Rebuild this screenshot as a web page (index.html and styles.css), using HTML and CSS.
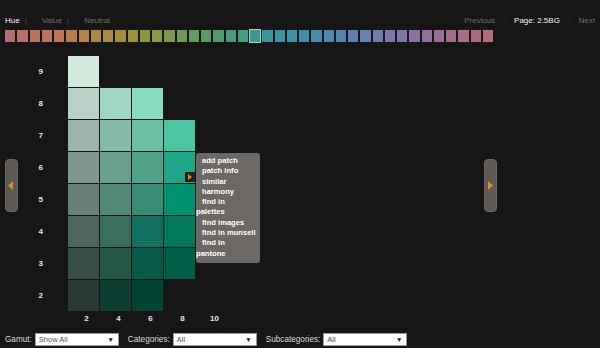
FILE: index.html
```html
<!DOCTYPE html>
<html lang="en">
  <head>
    <meta charset="UTF-8" />
    <title>Munsell Hue 2.5BG</title>
    <link rel="stylesheet" href="styles.css">
  </head>
  <body>
    <!-- top nav: views on the left, paging on the right -->
    <div class="topbar">
      <div class="views">
        <a class="view active">Hue</a><span class="pipe">|</span>
        <a class="view">Value</a><span class="pipe">|</span>
        <a class="view">Neutral</a>
      </div>
      <div class="pager">
        <a class="dim">Previous</a><span class="dots">::</span>
        <span class="page">Page: 2.5BG</span><span class="dots">::</span>
        <a class="dim">Next</a>
      </div>
    </div>

    <!-- 40 hue pages, 2.5R through 10RP -->
    <div class="hues">
      <span class="hue" style="background:#b56c70"></span>
      <span class="hue" style="background:#b86e6a"></span>
      <span class="hue" style="background:#ba7064"></span>
      <span class="hue" style="background:#bb735e"></span>
      <span class="hue" style="background:#bb7756"></span>
      <span class="hue" style="background:#b87c4e"></span>
      <span class="hue" style="background:#b38248"></span>
      <span class="hue" style="background:#ad8742"></span>
      <span class="hue" style="background:#a68c3e"></span>
      <span class="hue" style="background:#9e903c"></span>
      <span class="hue" style="background:#96933c"></span>
      <span class="hue" style="background:#8e963e"></span>
      <span class="hue" style="background:#869842"></span>
      <span class="hue" style="background:#7b9948"></span>
      <span class="hue" style="background:#709a52"></span>
      <span class="hue" style="background:#659a5b"></span>
      <span class="hue" style="background:#5a9a64"></span>
      <span class="hue" style="background:#519a6e"></span>
      <span class="hue" style="background:#499a78"></span>
      <span class="hue" style="background:#439a82"></span>
      <span class="hue current" style="background:#3c998c"></span>
      <span class="hue" style="background:#3a9795"></span>
      <span class="hue" style="background:#3a959d"></span>
      <span class="hue" style="background:#3b92a4"></span>
      <span class="hue" style="background:#3e8fa9"></span>
      <span class="hue" style="background:#448cac"></span>
      <span class="hue" style="background:#4c88ae"></span>
      <span class="hue" style="background:#5585af"></span>
      <span class="hue" style="background:#5f82af"></span>
      <span class="hue" style="background:#687fae"></span>
      <span class="hue" style="background:#717cac"></span>
      <span class="hue" style="background:#7a79a9"></span>
      <span class="hue" style="background:#8276a5"></span>
      <span class="hue" style="background:#8a73a0"></span>
      <span class="hue" style="background:#92719b"></span>
      <span class="hue" style="background:#996f95"></span>
      <span class="hue" style="background:#a06d8f"></span>
      <span class="hue" style="background:#a66c88"></span>
      <span class="hue" style="background:#ac6c80"></span>
      <span class="hue" style="background:#b16c78"></span>
    </div>

    <div class="main">
      <a class="nav prev">
        <svg width="5" height="9" viewBox="0 0 5 9"><path d="M5 0 L0 4.5 L5 9 Z" fill="#e8881c"/></svg>
      </a>

      <!-- value rows (9 at top) x chroma columns -->
      <div class="chart">
        <div class="vlabel">9</div>
        <div class="chip" style="background:#d3ebdf"></div>
        <div></div><div></div><div></div><div></div>

        <div class="vlabel">8</div>
        <div class="chip" style="background:#b8d0c6"></div>
        <div class="chip" style="background:#a0d7c4"></div>
        <div class="chip" style="background:#88dcc0"></div>
        <div></div><div></div>

        <div class="vlabel">7</div>
        <div class="chip" style="background:#9bb3a9"></div>
        <div class="chip" style="background:#87bba8"></div>
        <div class="chip" style="background:#6cbfa4"></div>
        <div class="chip" style="background:#4dc4a2"></div>
        <div></div>

        <div class="vlabel">6</div>
        <div class="chip" style="background:#80978f"></div>
        <div class="chip" style="background:#6b9f8e"></div>
        <div class="chip" style="background:#52a38a"></div>
        <div class="chip picked" style="background:#1fa888">
          <span class="menu-btn">
            <svg width="4" height="6" viewBox="0 0 4 6"><path d="M0 0 L4 3 L0 6 Z" fill="#e8881c"/></svg>
          </span>
          <ul class="menu">
            <li>add patch</li>
            <li>patch info</li>
            <li>similar</li>
            <li>harmony</li>
            <li>find in<br>palettes</li>
            <li>find images</li>
            <li>find in munsell</li>
            <li>find in<br>pantone</li>
          </ul>
        </div>
        <div></div>

        <div class="vlabel">5</div>
        <div class="chip" style="background:#687f79"></div>
        <div class="chip" style="background:#538777"></div>
        <div class="chip" style="background:#388b74"></div>
        <div class="chip" style="background:#009270"></div>
        <div></div>

        <div class="vlabel">4</div>
        <div class="chip" style="background:#4f6660"></div>
        <div class="chip" style="background:#3b6d5f"></div>
        <div class="chip" style="background:#11715e"></div>
        <div class="chip" style="background:#00765b"></div>
        <div></div>

        <div class="vlabel">3</div>
        <div class="chip" style="background:#3a4e48"></div>
        <div class="chip" style="background:#265646"></div>
        <div class="chip" style="background:#065a47"></div>
        <div class="chip" style="background:#005e47"></div>
        <div></div>

        <div class="vlabel">2</div>
        <div class="chip" style="background:#283935"></div>
        <div class="chip" style="background:#0e3e32"></div>
        <div class="chip" style="background:#024232"></div>
        <div></div><div></div>

        <div></div>
        <div class="clabel">2</div>
        <div class="clabel">4</div>
        <div class="clabel">6</div>
        <div class="clabel">8</div>
        <div class="clabel">10</div>
      </div>

      <a class="nav next">
        <svg width="5" height="9" viewBox="0 0 5 9"><path d="M0 0 L5 4.5 L0 9 Z" fill="#e8881c"/></svg>
      </a>
    </div>

    <!-- filters -->
    <div class="filters">
      <label>Gamut:</label>
      <div class="select"><span>Show All</span><span class="caret">▼</span></div>
      <label>Categories:</label>
      <div class="select"><span>All</span><span class="caret">▼</span></div>
      <label>Subcategories:</label>
      <div class="select"><span>All</span><span class="caret">▼</span></div>
    </div>
  </body>
</html>
```

FILE: styles.css
```css
* {
  margin: 0;
  padding: 0;
  box-sizing: border-box;
}

body {
  background: #161616;
  font-family: "Liberation Sans", Arial, sans-serif;
  font-size: 8px;
  color: #ddd;
  width: 600px;
  height: 348px;
  overflow: hidden;
}

/* top bar */
.topbar {
  display: flex;
  justify-content: space-between;
  padding: 16px 5px 0;
  line-height: 10px;
}

.view {
  color: #6f6f6f;
}

.view.active {
  color: #f2f2f2;
}

.pipe {
  color: #4a4a4a;
  margin: 0 13px 0 5px;
}

.pager .dim {
  color: #6f6f6f;
}

.dots {
  color: #3e3e3e;
  margin: 0 6px;
}

.page {
  color: #f2f2f2;
}

/* hue strip */
.hues {
  display: flex;
  gap: 2px;
  padding-left: 5px;
  margin-top: 4px;
  height: 12px;
}

.hue {
  width: 10.25px;
  height: 12px;
  flex: none;
}

.hue.current {
  outline: 1px solid #84dcc4;
  outline-offset: 0;
}

/* chart */
.main {
  display: flex;
  align-items: flex-start;
  margin-top: 14px;
  padding: 0 103px 0 5px;
}

.nav {
  width: 13px;
  height: 53px;
  margin-top: 103px;
  background: #5d5955;
  border: 1px solid #6a6662;
  border-radius: 4px;
  display: flex;
  align-items: center;
  justify-content: center;
}

.nav.prev svg {
  margin-right: 2px;
}

.nav.next {
  margin-left: auto;
}

.chart {
  display: grid;
  grid-template-columns: 49px repeat(5, 31px);
  grid-template-rows: repeat(8, 31px) 14px;
  gap: 1px;
}

.vlabel {
  text-align: right;
  padding-right: 24px;
  line-height: 31px;
  font-weight: bold;
  color: #e6e6e6;
}

.clabel {
  line-height: 14px;
  text-align: center;
  padding-left: 6px;
  font-weight: bold;
  color: #e6e6e6;
}

.chip {
  position: relative;
}

.menu-btn {
  position: absolute;
  right: 0;
  bottom: 1px;
  width: 10px;
  height: 10px;
  background: #222;
  display: flex;
  align-items: center;
  justify-content: center;
}

/* patch popup */
.menu {
  position: absolute;
  left: 32px;
  top: 1px;
  width: 64px;
  padding: 3px 0 4px;
  background: #6c6865;
  border-radius: 3px;
  list-style: none;
  font-size: 7.6px;
  font-weight: bold;
  line-height: 10.3px;
  color: #fff;
  z-index: 2;
}

.menu li {
  text-indent: 6px;
}

/* filters */
.filters {
  display: flex;
  align-items: center;
  padding-left: 5px;
  margin-top: 7px;
  height: 13px;
}

.filters label {
  color: #dcdcdc;
  font-size: 8.2px;
  margin-right: 3px;
}

.select {
  width: 84px;
  height: 13px;
  background: #fff;
  border: 1px solid #9a9a9a;
  display: flex;
  align-items: center;
  justify-content: space-between;
  padding: 0 4px 0 3px;
  margin-right: 9px;
  color: #555;
  font-size: 7.5px;
}

.caret {
  color: #111;
  font-size: 6.5px;
}
```
